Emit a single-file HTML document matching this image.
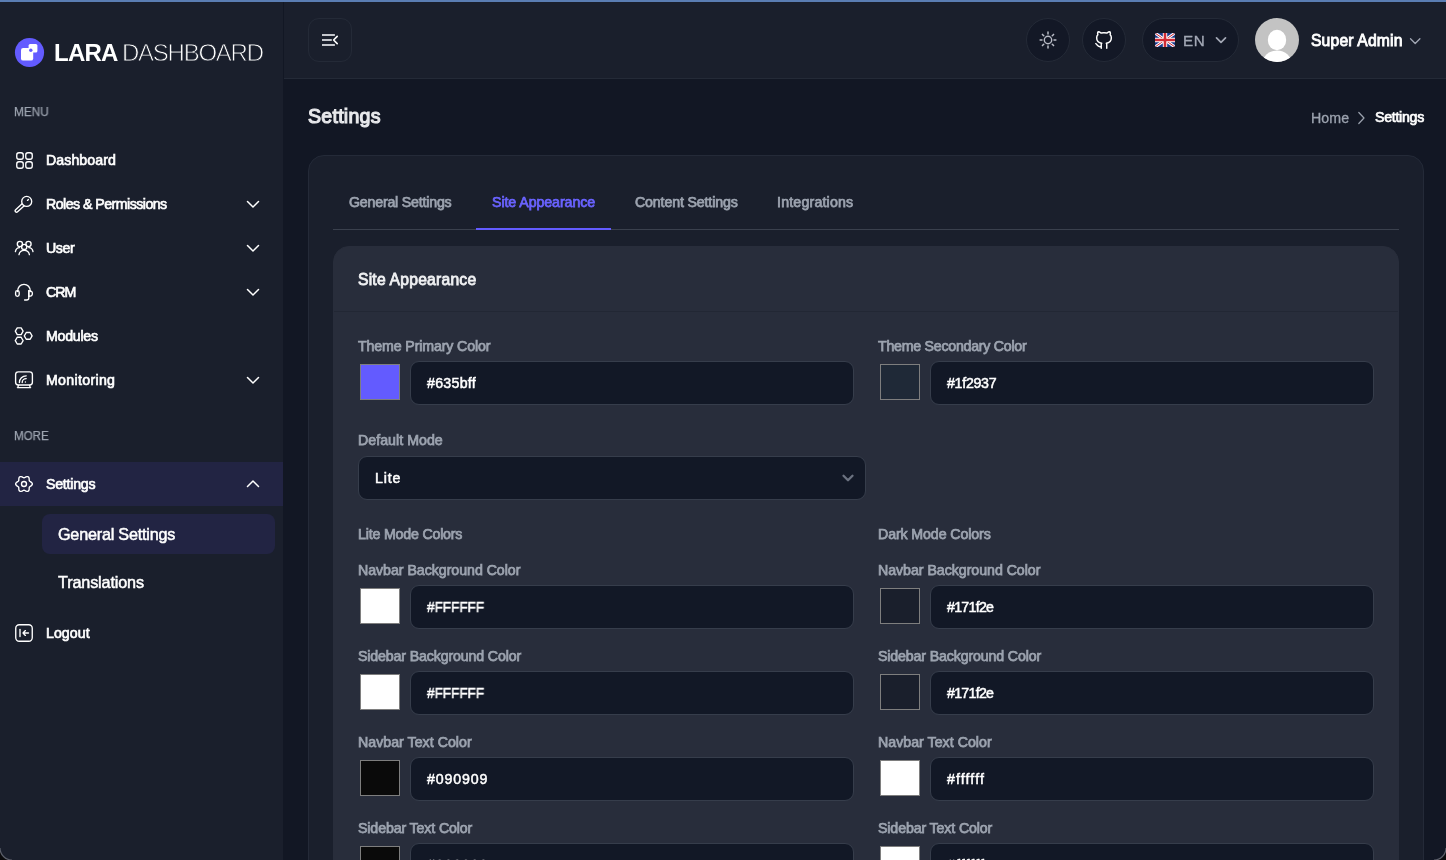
<!DOCTYPE html>
<html><head><meta charset="utf-8"><title>Settings - Lara Dashboard</title>
<style>
html,body{margin:0;padding:0;}
body{width:1446px;height:860px;overflow:hidden;position:relative;background:#121724;font-family:"Liberation Sans", sans-serif;}
.t{position:absolute;white-space:nowrap;line-height:1;will-change:transform;}
</style></head><body>
<div style="position:absolute;left:0px;top:0px;width:1446px;height:2px;background:#5a7db3"></div>
<div style="position:absolute;left:0px;top:2px;width:283px;height:858px;background:#1a1f2c"></div>
<div style="position:absolute;left:284px;top:2px;width:1162px;height:76px;background:#1a1f2c"></div>
<div style="position:absolute;left:284px;top:78px;width:1162px;height:1px;background:#242a37"></div>
<div style="position:absolute;left:0px;top:462px;width:283px;height:44px;background:#222443"></div>
<div style="position:absolute;left:42px;top:514px;width:233px;height:40px;background:#222443;border-radius:8px"></div>
<svg style="position:absolute;left:14px;top:37px;" width="31" height="31" viewBox="0 0 31 31" fill="none"><circle cx="15.5" cy="15.5" r="14.6" fill="#635bff"/><rect x="14.6" y="7" width="8.8" height="8.6" rx="1.6" fill="#fff"/><rect x="7" y="11" width="12.2" height="12.6" rx="2.2" fill="#fff"/><circle cx="16.8" cy="13.3" r="1.7" fill="#635bff"/></svg>
<svg style="position:absolute;left:15px;top:151px;" width="19" height="19" viewBox="0 0 19 19" fill="none"><rect x="1.75" y="1.75" width="6.5" height="6.5" rx="2.2" stroke="#ffffff" stroke-width="1.35" stroke-linecap="round" stroke-linejoin="round"/><rect x="10.75" y="1.75" width="6.5" height="6.5" rx="2.2" stroke="#ffffff" stroke-width="1.35" stroke-linecap="round" stroke-linejoin="round"/><rect x="1.75" y="10.75" width="6.5" height="6.5" rx="2.2" stroke="#ffffff" stroke-width="1.35" stroke-linecap="round" stroke-linejoin="round"/><rect x="10.75" y="10.75" width="6.5" height="6.5" rx="2.2" stroke="#ffffff" stroke-width="1.35" stroke-linecap="round" stroke-linejoin="round"/></svg>
<svg style="position:absolute;left:14px;top:194px;" width="20" height="20" viewBox="0 0 20 20" fill="none"><path d="M9.6 10.4 L2.6 16.8" stroke="#fff" stroke-width="4.2" stroke-linecap="round"/><path d="M9.6 10.4 L2.6 16.8" stroke="#1a1f2c" stroke-width="1.5" stroke-linecap="round"/><circle cx="12.7" cy="7.4" r="5.0" fill="#1a1f2c" stroke="#fff" stroke-width="1.35"/><path d="M13.5 6.4 L14.4 5.5" stroke="#ffffff" stroke-width="1.35" stroke-linecap="round" stroke-linejoin="round"/></svg>
<svg style="position:absolute;left:14px;top:238px;" width="20" height="18" viewBox="0 0 20 18" fill="none"><circle cx="5.9" cy="6.0" r="2.6" stroke="#ffffff" stroke-width="1.35" stroke-linecap="round" stroke-linejoin="round"/><circle cx="14.5" cy="6.0" r="2.6" stroke="#ffffff" stroke-width="1.35" stroke-linecap="round" stroke-linejoin="round"/><circle cx="10.2" cy="8.9" r="2.6" stroke="#ffffff" stroke-width="1.35" stroke-linecap="round" stroke-linejoin="round"/><path d="M1.4 13.6 C1.9 10.9 3.6 9.6 5.6 9.6" stroke="#ffffff" stroke-width="1.35" stroke-linecap="round" stroke-linejoin="round"/><path d="M19 13.6 C18.5 10.9 16.8 9.6 14.8 9.6" stroke="#ffffff" stroke-width="1.35" stroke-linecap="round" stroke-linejoin="round"/><path d="M5 16.6 C5.5 13.8 7.6 12.4 10.2 12.4 C12.8 12.4 14.9 13.8 15.4 16.6" stroke="#ffffff" stroke-width="1.35" stroke-linecap="round" stroke-linejoin="round"/></svg>
<svg style="position:absolute;left:14px;top:282px;" width="20" height="20" viewBox="0 0 20 20" fill="none"><path d="M3.6 9.5 C3.6 5.2 6.4 2.3 10 2.3 C13.6 2.3 16.4 5.2 16.4 9.5" stroke="#ffffff" stroke-width="1.35" stroke-linecap="round" stroke-linejoin="round"/><rect x="1.6" y="8.6" width="3.6" height="5.8" rx="1.8" stroke="#ffffff" stroke-width="1.35" stroke-linecap="round" stroke-linejoin="round"/><path d="M14.8 8.6 C17 8.6 18.4 10 18.4 11.5 C18.4 13 17 14.4 14.8 14.4 Z" stroke="#ffffff" stroke-width="1.35" stroke-linecap="round" stroke-linejoin="round"/><path d="M14.8 8.6 V16 C14.8 17.2 13.8 18 12.6 18 H10.6" stroke="#ffffff" stroke-width="1.35" stroke-linecap="round" stroke-linejoin="round"/></svg>
<svg style="position:absolute;left:14px;top:326px;" width="20" height="20" viewBox="0 0 20 20" fill="none"><path d="M9.10 5.20 L7.15 8.58 L3.25 8.58 L1.30 5.20 L3.25 1.82 L7.15 1.82 Z" stroke="#ffffff" stroke-width="1.35" stroke-linecap="round" stroke-linejoin="round"/><path d="M9.10 14.60 L7.15 17.98 L3.25 17.98 L1.30 14.60 L3.25 11.22 L7.15 11.22 Z" stroke="#ffffff" stroke-width="1.35" stroke-linecap="round" stroke-linejoin="round"/><path d="M18.10 9.90 L16.15 13.28 L12.25 13.28 L10.30 9.90 L12.25 6.52 L16.15 6.52 Z" stroke="#ffffff" stroke-width="1.35" stroke-linecap="round" stroke-linejoin="round"/></svg>
<svg style="position:absolute;left:14px;top:370px;" width="20" height="20" viewBox="0 0 20 20" fill="none"><rect x="1.6" y="1.8" width="16.8" height="13.2" rx="2.8" stroke="#ffffff" stroke-width="1.35" stroke-linecap="round" stroke-linejoin="round"/><path d="M4.4 15.4 L3.8 17.6 M15.6 15.4 L16.2 17.6 M3.4 17.6 H16.6" stroke="#ffffff" stroke-width="1.35" stroke-linecap="round" stroke-linejoin="round"/><path d="M8.2 12.6 C8.2 10.4 10 8.6 12.2 8.6" stroke="#ffffff" stroke-width="1.35" stroke-linecap="round" stroke-linejoin="round"/><path d="M5.4 12.6 C5.4 8.8 8.4 5.8 12.2 5.8" stroke="#ffffff" stroke-width="1.35" stroke-linecap="round" stroke-linejoin="round"/><circle cx="11.4" cy="12" r="0.7" fill="#fff"/></svg>
<svg style="position:absolute;left:14px;top:474px;" width="20" height="20" viewBox="0 0 20 20" fill="none"><path d="M 18.35 10.00 L 18.31 10.36 L 18.18 10.72 L 17.97 11.05 L 17.71 11.36 L 17.39 11.64 L 17.05 11.89 L 16.70 12.11 L 16.37 12.32 L 16.06 12.51 L 15.79 12.70 L 15.58 12.90 L 15.41 13.12 L 15.30 13.38 L 15.23 13.67 L 15.20 13.99 L 15.19 14.35 L 15.18 14.75 L 15.16 15.16 L 15.12 15.58 L 15.03 15.99 L 14.90 16.38 L 14.71 16.72 L 14.47 17.01 L 14.18 17.23 L 13.84 17.37 L 13.47 17.44 L 13.08 17.43 L 12.68 17.35 L 12.28 17.22 L 11.89 17.05 L 11.52 16.86 L 11.18 16.67 L 10.86 16.50 L 10.56 16.37 L 10.27 16.28 L 10.00 16.25 L 9.73 16.28 L 9.44 16.37 L 9.14 16.50 L 8.82 16.67 L 8.48 16.86 L 8.11 17.05 L 7.72 17.22 L 7.32 17.35 L 6.92 17.43 L 6.53 17.44 L 6.16 17.37 L 5.83 17.23 L 5.53 17.01 L 5.29 16.72 L 5.10 16.38 L 4.97 15.99 L 4.88 15.58 L 4.84 15.16 L 4.82 14.75 L 4.81 14.35 L 4.80 13.99 L 4.77 13.67 L 4.70 13.38 L 4.59 13.12 L 4.42 12.90 L 4.21 12.70 L 3.94 12.51 L 3.63 12.32 L 3.30 12.11 L 2.95 11.89 L 2.61 11.64 L 2.29 11.36 L 2.03 11.05 L 1.82 10.72 L 1.69 10.36 L 1.65 10.00 L 1.69 9.64 L 1.82 9.28 L 2.03 8.95 L 2.29 8.64 L 2.61 8.36 L 2.95 8.11 L 3.30 7.89 L 3.63 7.68 L 3.94 7.49 L 4.21 7.30 L 4.42 7.10 L 4.59 6.87 L 4.70 6.62 L 4.77 6.33 L 4.80 6.01 L 4.81 5.65 L 4.82 5.25 L 4.84 4.84 L 4.88 4.42 L 4.97 4.01 L 5.10 3.62 L 5.29 3.28 L 5.53 2.99 L 5.82 2.77 L 6.16 2.63 L 6.53 2.56 L 6.92 2.57 L 7.32 2.65 L 7.72 2.78 L 8.11 2.95 L 8.48 3.14 L 8.82 3.33 L 9.14 3.50 L 9.44 3.63 L 9.73 3.72 L 10.00 3.75 L 10.27 3.72 L 10.56 3.63 L 10.86 3.50 L 11.18 3.33 L 11.52 3.14 L 11.89 2.95 L 12.28 2.78 L 12.68 2.65 L 13.08 2.57 L 13.47 2.56 L 13.84 2.63 L 14.18 2.77 L 14.47 2.99 L 14.71 3.28 L 14.90 3.62 L 15.03 4.01 L 15.12 4.42 L 15.16 4.84 L 15.18 5.25 L 15.19 5.65 L 15.20 6.01 L 15.23 6.33 L 15.30 6.62 L 15.41 6.87 L 15.58 7.10 L 15.79 7.30 L 16.06 7.49 L 16.37 7.68 L 16.70 7.89 L 17.05 8.11 L 17.39 8.36 L 17.71 8.64 L 17.97 8.95 L 18.18 9.28 L 18.31 9.64 Z" stroke="#ffffff" stroke-width="1.35" stroke-linecap="round" stroke-linejoin="round"/><circle cx="10" cy="10" r="2.5" stroke="#ffffff" stroke-width="1.35" stroke-linecap="round" stroke-linejoin="round"/></svg>
<svg style="position:absolute;left:14px;top:623px;" width="20" height="20" viewBox="0 0 20 20" fill="none"><rect x="1.75" y="1.75" width="16.5" height="16.5" rx="3.5" stroke="#ffffff" stroke-width="1.35" stroke-linecap="round" stroke-linejoin="round"/><path d="M6 6.5 V13.5" stroke="#ffffff" stroke-width="1.35" stroke-linecap="round" stroke-linejoin="round"/><path d="M14.5 10 H9 M11.4 7.6 L9 10 L11.4 12.4" stroke="#ffffff" stroke-width="1.35" stroke-linecap="round" stroke-linejoin="round"/></svg>
<svg style="position:absolute;left:245px;top:198px;" width="16" height="12" viewBox="0 0 16 12" fill="none"><path d="M2.5 3.5 L8 9 L13.5 3.5" stroke="#fff" stroke-width="1.5" stroke-linecap="round" stroke-linejoin="round"/></svg>
<svg style="position:absolute;left:245px;top:242px;" width="16" height="12" viewBox="0 0 16 12" fill="none"><path d="M2.5 3.5 L8 9 L13.5 3.5" stroke="#fff" stroke-width="1.5" stroke-linecap="round" stroke-linejoin="round"/></svg>
<svg style="position:absolute;left:245px;top:286px;" width="16" height="12" viewBox="0 0 16 12" fill="none"><path d="M2.5 3.5 L8 9 L13.5 3.5" stroke="#fff" stroke-width="1.5" stroke-linecap="round" stroke-linejoin="round"/></svg>
<svg style="position:absolute;left:245px;top:374px;" width="16" height="12" viewBox="0 0 16 12" fill="none"><path d="M2.5 3.5 L8 9 L13.5 3.5" stroke="#fff" stroke-width="1.5" stroke-linecap="round" stroke-linejoin="round"/></svg>
<svg style="position:absolute;left:245px;top:478px;" width="16" height="12" viewBox="0 0 16 12" fill="none"><path d="M2.5 8.5 L8 3 L13.5 8.5" stroke="#fff" stroke-width="1.5" stroke-linecap="round" stroke-linejoin="round"/></svg>
<div style="position:absolute;left:308px;top:18px;width:42px;height:42px;border:1px solid #242a37;border-radius:11px"></div>
<svg style="position:absolute;left:318px;top:30px;" width="24" height="20" viewBox="0 0 24 20" fill="none"><path d="M4 4.9 H16.9 M4 10 H13.8 M4 15.1 H16.9" stroke="#c4c6cc" stroke-width="2"/><path d="M19.2 6.4 L15.6 10 L19.2 13.6" stroke="#fff" stroke-width="1.6" stroke-linecap="round" stroke-linejoin="round"/></svg>
<div style="position:absolute;left:1026px;top:18px;width:42px;height:42px;border:1px solid #242a37;border-radius:50%;background:#131826"></div>
<svg style="position:absolute;left:1037px;top:29px;" width="22" height="22" viewBox="0 0 22 22" fill="none"><circle cx="11" cy="11" r="3.7" stroke="#b9bcc6" stroke-width="1.4"/><path d="M17.00 11.00 L18.90 11.00" stroke="#b9bcc6" stroke-width="1.5" stroke-linecap="round"/><path d="M15.24 15.24 L16.59 16.59" stroke="#b9bcc6" stroke-width="1.5" stroke-linecap="round"/><path d="M11.00 17.00 L11.00 18.90" stroke="#b9bcc6" stroke-width="1.5" stroke-linecap="round"/><path d="M6.76 15.24 L5.41 16.59" stroke="#b9bcc6" stroke-width="1.5" stroke-linecap="round"/><path d="M5.00 11.00 L3.10 11.00" stroke="#b9bcc6" stroke-width="1.5" stroke-linecap="round"/><path d="M6.76 6.76 L5.41 5.41" stroke="#b9bcc6" stroke-width="1.5" stroke-linecap="round"/><path d="M11.00 5.00 L11.00 3.10" stroke="#b9bcc6" stroke-width="1.5" stroke-linecap="round"/><path d="M15.24 6.76 L16.59 5.41" stroke="#b9bcc6" stroke-width="1.5" stroke-linecap="round"/></svg>
<div style="position:absolute;left:1082px;top:18px;width:42px;height:42px;border:1px solid #242a37;border-radius:50%;background:#131826"></div>
<svg style="position:absolute;left:1093px;top:29px;" width="22" height="22" viewBox="0 0 24 24" fill="none"><path d="M9 19c-4.3 1.4 -4.3 -2.5 -6 -3m12 5v-3.5c0 -1 .1 -1.4 -.5 -2c2.8 -.3 5.5 -1.4 5.5 -6a4.6 4.6 0 0 0 -1.3 -3.2a4.2 4.2 0 0 0 -.1 -3.2s-1.1 -.3 -3.5 1.3a12.3 12.3 0 0 0 -6.2 0c-2.4 -1.6 -3.5 -1.3 -3.5 -1.3a4.2 4.2 0 0 0 -.1 3.2a4.6 4.6 0 0 0 -1.3 3.2c0 4.6 2.7 5.7 5.5 6c-.6 .6 -.6 1.2 -.5 2v3.5" stroke="#fff" stroke-width="1.6" stroke-linecap="round" stroke-linejoin="round"/></svg>
<div style="position:absolute;left:1142px;top:18px;width:95px;height:42px;border:1px solid #242a37;border-radius:22px;background:#131826"></div>
<svg style="position:absolute;left:1155px;top:33px;" width="20" height="14" viewBox="0 0 20 14" fill="none"><defs><clipPath id="fc"><rect width="20" height="14" rx="2"/></clipPath></defs><g clip-path="url(#fc)"><rect width="20" height="14" fill="#1a3a8c"/><path d="M0 0 L20 14 M20 0 L0 14" stroke="#fff" stroke-width="3"/><path d="M0 0 L20 14 M20 0 L0 14" stroke="#c8202f" stroke-width="1"/><path d="M10 0 V14 M0 7 H20" stroke="#fff" stroke-width="4.4"/><path d="M10 0 V14 M0 7 H20" stroke="#cf2b36" stroke-width="2.6"/></g></svg>
<svg style="position:absolute;left:1213px;top:34px;" width="16" height="12" viewBox="0 0 16 12" fill="none"><path d="M3.5 3.8 L8 8.3 L12.5 3.8" stroke="#a3a8b5" stroke-width="1.7" stroke-linecap="round" stroke-linejoin="round"/></svg>
<svg style="position:absolute;left:1255px;top:18px;" width="44" height="44" viewBox="0 0 44 44" fill="none"><defs><clipPath id="av"><circle cx="22" cy="22" r="22"/></clipPath></defs><g clip-path="url(#av)"><rect width="44" height="44" fill="#c3c3c3"/><ellipse cx="22" cy="22" rx="9.2" ry="10.2" fill="#fff"/><ellipse cx="22" cy="46" rx="15" ry="13.5" fill="#fff"/></g></svg>
<svg style="position:absolute;left:1407px;top:35px;" width="16" height="12" viewBox="0 0 16 12" fill="none"><path d="M3.5 3.8 L8.2 8.5 L12.9 3.8" stroke="#a3a8b5" stroke-width="1.3" stroke-linecap="round" stroke-linejoin="round"/></svg>
<svg style="position:absolute;left:1355px;top:111px;" width="12" height="14" viewBox="0 0 12 14" fill="none"><path d="M3.8 1.5 L9 7 L3.8 12.5" stroke="#9ca3af" stroke-width="1.2" stroke-linecap="round" stroke-linejoin="round"/></svg>
<div style="position:absolute;left:308px;top:155px;width:1114px;height:720px;border:1px solid #242a38;border-radius:16px;background:#1a1f2c"></div>
<div style="position:absolute;left:333px;top:229px;width:1066px;height:1px;background:#3a404d"></div>
<div style="position:absolute;left:476px;top:228px;width:135px;height:2px;background:#635bff"></div>
<div style="position:absolute;left:333px;top:246px;width:1064px;height:720px;border:1px solid #282d3b;border-radius:16px;background:#282d3b"></div>
<div style="position:absolute;left:334px;top:311px;width:1064px;height:1px;background:#222734"></div>
<div style="position:absolute;left:410px;top:361px;width:442px;height:42px;border:1px solid #363d4b;border-radius:9px;background:#121826"></div>
<div style="position:absolute;left:360px;top:364px;width:38px;height:34px;border:1px solid #7e7e7e;background:#635bff"></div>
<div style="position:absolute;left:930px;top:361px;width:442px;height:42px;border:1px solid #363d4b;border-radius:9px;background:#121826"></div>
<div style="position:absolute;left:880px;top:364px;width:38px;height:34px;border:1px solid #7e7e7e;background:#1f2937"></div>
<div style="position:absolute;left:358px;top:456px;width:506px;height:42px;border:1px solid #363d4b;border-radius:9px;background:#121826"></div>
<svg style="position:absolute;left:840px;top:470px;" width="16" height="16" viewBox="0 0 16 16" fill="none"><path d="M3.5 5.8 L8 10.3 L12.5 5.8" stroke="#6b7280" stroke-width="2.3" stroke-linecap="round" stroke-linejoin="round"/></svg>
<div style="position:absolute;left:410px;top:585px;width:442px;height:42px;border:1px solid #363d4b;border-radius:9px;background:#121826"></div>
<div style="position:absolute;left:360px;top:588px;width:38px;height:34px;border:1px solid #7e7e7e;background:#ffffff"></div>
<div style="position:absolute;left:930px;top:585px;width:442px;height:42px;border:1px solid #363d4b;border-radius:9px;background:#121826"></div>
<div style="position:absolute;left:880px;top:588px;width:38px;height:34px;border:1px solid #7e7e7e;background:#1a1f2c"></div>
<div style="position:absolute;left:410px;top:671px;width:442px;height:42px;border:1px solid #363d4b;border-radius:9px;background:#121826"></div>
<div style="position:absolute;left:360px;top:674px;width:38px;height:34px;border:1px solid #7e7e7e;background:#ffffff"></div>
<div style="position:absolute;left:930px;top:671px;width:442px;height:42px;border:1px solid #363d4b;border-radius:9px;background:#121826"></div>
<div style="position:absolute;left:880px;top:674px;width:38px;height:34px;border:1px solid #7e7e7e;background:#1a1f2c"></div>
<div style="position:absolute;left:410px;top:757px;width:442px;height:42px;border:1px solid #363d4b;border-radius:9px;background:#121826"></div>
<div style="position:absolute;left:360px;top:760px;width:38px;height:34px;border:1px solid #7e7e7e;background:#0a0a0a"></div>
<div style="position:absolute;left:930px;top:757px;width:442px;height:42px;border:1px solid #363d4b;border-radius:9px;background:#121826"></div>
<div style="position:absolute;left:880px;top:760px;width:38px;height:34px;border:1px solid #7e7e7e;background:#ffffff"></div>
<div style="position:absolute;left:410px;top:843px;width:442px;height:42px;border:1px solid #363d4b;border-radius:9px;background:#121826"></div>
<div style="position:absolute;left:360px;top:846px;width:38px;height:34px;border:1px solid #7e7e7e;background:#0a0a0a"></div>
<div style="position:absolute;left:930px;top:843px;width:442px;height:42px;border:1px solid #363d4b;border-radius:9px;background:#121826"></div>
<div style="position:absolute;left:880px;top:846px;width:38px;height:34px;border:1px solid #7e7e7e;background:#ffffff"></div>
<svg style="position:absolute;left:1434px;top:848px;" width="12" height="12" viewBox="0 0 12 12" fill="none"><path d="M12 0 V12 H0 A12 12 0 0 0 12 0 Z" fill="#0b0b0d"/><path d="M0 12 A12 12 0 0 0 12 0" stroke="#5b5f6a" stroke-width="1.2"/></svg>
<svg style="position:absolute;left:0px;top:848px;" width="12" height="12" viewBox="0 0 12 12" fill="none"><path d="M0 0 V12 H12 A12 12 0 0 1 0 0 Z" fill="#0b0b0d"/><path d="M12 12 A12 12 0 0 1 0 0" stroke="#5b5f6a" stroke-width="1.2"/></svg>
<div class="t" style="left:54.22px;top:40.68px;font-size:24.00px;letter-spacing:-0.747px;color:#ffffff;font-weight:700;">LARA</div>
<div class="t" style="left:121.93px;top:40.68px;font-size:24.00px;letter-spacing:-1.253px;color:#ffffff;-webkit-text-stroke:0.80px #1a1f2c;">DASHBOARD</div>
<div class="t" style="left:13.64px;top:105.64px;font-size:12.00px;letter-spacing:0.000px;color:#9ca3af;-webkit-text-stroke:0.25px #9ca3af;transform:scaleX(0.9796);transform-origin:1.11px 0;">MENU</div>
<div class="t" style="left:45.76px;top:152.88px;font-size:14.20px;letter-spacing:0.057px;color:#ffffff;-webkit-text-stroke:0.65px #ffffff;">Dashboard</div>
<div class="t" style="left:45.76px;top:196.98px;font-size:14.20px;letter-spacing:-0.537px;color:#ffffff;-webkit-text-stroke:0.65px #ffffff;">Roles &amp; Permissions</div>
<div class="t" style="left:45.83px;top:240.98px;font-size:14.20px;letter-spacing:-0.402px;color:#ffffff;-webkit-text-stroke:0.65px #ffffff;">User</div>
<div class="t" style="left:46.22px;top:285.18px;font-size:14.20px;letter-spacing:-0.954px;color:#ffffff;-webkit-text-stroke:0.65px #ffffff;">CRM</div>
<div class="t" style="left:45.76px;top:328.78px;font-size:14.20px;letter-spacing:-0.275px;color:#ffffff;-webkit-text-stroke:0.65px #ffffff;">Modules</div>
<div class="t" style="left:45.76px;top:372.98px;font-size:14.20px;letter-spacing:0.303px;color:#ffffff;-webkit-text-stroke:0.65px #ffffff;">Monitoring</div>
<div class="t" style="left:13.64px;top:430.34px;font-size:12.00px;letter-spacing:0.000px;color:#9ca3af;-webkit-text-stroke:0.25px #9ca3af;transform:scaleX(0.9634);transform-origin:1.11px 0;">MORE</div>
<div class="t" style="left:45.99px;top:477.18px;font-size:14.20px;letter-spacing:-0.243px;color:#ffffff;-webkit-text-stroke:0.65px #ffffff;">Settings</div>
<div class="t" style="left:57.74px;top:526.19px;font-size:16.20px;letter-spacing:-0.219px;color:#ffffff;-webkit-text-stroke:0.50px #ffffff;">General Settings</div>
<div class="t" style="left:58.19px;top:574.29px;font-size:16.20px;letter-spacing:-0.137px;color:#ffffff;-webkit-text-stroke:0.50px #ffffff;">Translations</div>
<div class="t" style="left:45.66px;top:625.58px;font-size:14.20px;letter-spacing:0.035px;color:#ffffff;-webkit-text-stroke:0.65px #ffffff;">Logout</div>
<div class="t" style="left:1182.73px;top:33.03px;font-size:15.20px;letter-spacing:0.515px;color:#a3a8b5;-webkit-text-stroke:0.35px #a3a8b5;">EN</div>
<div class="t" style="left:1311.02px;top:32.91px;font-size:15.70px;letter-spacing:0.158px;color:#ffffff;-webkit-text-stroke:0.85px #ffffff;">Super Admin</div>
<div class="t" style="left:307.87px;top:107.21px;font-size:19.60px;letter-spacing:0.239px;color:#e8e9ec;-webkit-text-stroke:1.10px #e8e9ec;">Settings</div>
<div class="t" style="left:1310.79px;top:110.98px;font-size:14.20px;letter-spacing:0.073px;color:#9ca3af;-webkit-text-stroke:0.30px #9ca3af;">Home</div>
<div class="t" style="left:1374.71px;top:110.48px;font-size:14.20px;letter-spacing:-0.279px;color:#ffffff;-webkit-text-stroke:0.70px #ffffff;">Settings</div>
<div class="t" style="left:348.77px;top:195.18px;font-size:14.20px;letter-spacing:-0.200px;color:#9ca3af;-webkit-text-stroke:0.75px #9ca3af;">General Settings</div>
<div class="t" style="left:491.54px;top:195.18px;font-size:14.20px;letter-spacing:-0.071px;color:#6a63ff;-webkit-text-stroke:0.75px #6a63ff;">Site Appearance</div>
<div class="t" style="left:634.87px;top:195.18px;font-size:14.20px;letter-spacing:-0.142px;color:#9ca3af;-webkit-text-stroke:0.75px #9ca3af;">Content Settings</div>
<div class="t" style="left:777.27px;top:195.18px;font-size:14.20px;letter-spacing:0.187px;color:#9ca3af;-webkit-text-stroke:0.75px #9ca3af;">Integrations</div>
<div class="t" style="left:357.89px;top:271.71px;font-size:15.70px;letter-spacing:0.213px;color:#f0f1f3;-webkit-text-stroke:0.80px #f0f1f3;">Site Appearance</div>
<div class="t" style="left:358.36px;top:339.28px;font-size:14.20px;letter-spacing:-0.130px;color:#9ca3af;-webkit-text-stroke:0.75px #9ca3af;">Theme Primary Color</div>
<div class="t" style="left:878.26px;top:339.28px;font-size:14.20px;letter-spacing:-0.255px;color:#9ca3af;-webkit-text-stroke:0.75px #9ca3af;">Theme Secondary Color</div>
<div class="t" style="left:427.49px;top:376.08px;font-size:14.20px;letter-spacing:0.283px;color:#ffffff;-webkit-text-stroke:0.50px #ffffff;">#635bff</div>
<div class="t" style="left:947.09px;top:376.08px;font-size:14.20px;letter-spacing:-0.278px;color:#ffffff;-webkit-text-stroke:0.50px #ffffff;">#1f2937</div>
<div class="t" style="left:358.01px;top:432.68px;font-size:14.20px;letter-spacing:0.034px;color:#9ca3af;-webkit-text-stroke:0.75px #9ca3af;">Default Mode</div>
<div class="t" style="left:374.69px;top:470.88px;font-size:14.20px;letter-spacing:0.800px;color:#ffffff;-webkit-text-stroke:0.50px #ffffff;">Lite</div>
<div class="t" style="left:357.71px;top:526.78px;font-size:14.20px;letter-spacing:-0.187px;color:#9ca3af;-webkit-text-stroke:0.75px #9ca3af;">Lite Mode Colors</div>
<div class="t" style="left:877.51px;top:526.78px;font-size:14.20px;letter-spacing:-0.107px;color:#9ca3af;-webkit-text-stroke:0.75px #9ca3af;">Dark Mode Colors</div>
<div class="t" style="left:357.51px;top:563.08px;font-size:14.20px;letter-spacing:-0.038px;color:#9ca3af;-webkit-text-stroke:0.75px #9ca3af;">Navbar Background Color</div>
<div class="t" style="left:877.51px;top:563.08px;font-size:14.20px;letter-spacing:-0.038px;color:#9ca3af;-webkit-text-stroke:0.75px #9ca3af;">Navbar Background Color</div>
<div class="t" style="left:427.49px;top:600.08px;font-size:14.20px;letter-spacing:0.000px;color:#ffffff;-webkit-text-stroke:0.50px #ffffff;transform:scaleX(0.9526);transform-origin:0.31px 0;">#FFFFFF</div>
<div class="t" style="left:947.09px;top:600.08px;font-size:14.20px;letter-spacing:-0.725px;color:#ffffff;-webkit-text-stroke:0.50px #ffffff;">#171f2e</div>
<div class="t" style="left:358.04px;top:649.08px;font-size:14.20px;letter-spacing:-0.141px;color:#9ca3af;-webkit-text-stroke:0.75px #9ca3af;">Sidebar Background Color</div>
<div class="t" style="left:878.04px;top:649.08px;font-size:14.20px;letter-spacing:-0.141px;color:#9ca3af;-webkit-text-stroke:0.75px #9ca3af;">Sidebar Background Color</div>
<div class="t" style="left:427.49px;top:686.08px;font-size:14.20px;letter-spacing:0.000px;color:#ffffff;-webkit-text-stroke:0.50px #ffffff;transform:scaleX(0.9526);transform-origin:0.31px 0;">#FFFFFF</div>
<div class="t" style="left:947.09px;top:686.08px;font-size:14.20px;letter-spacing:-0.725px;color:#ffffff;-webkit-text-stroke:0.50px #ffffff;">#171f2e</div>
<div class="t" style="left:357.51px;top:735.08px;font-size:14.20px;letter-spacing:0.022px;color:#9ca3af;-webkit-text-stroke:0.75px #9ca3af;">Navbar Text Color</div>
<div class="t" style="left:877.51px;top:735.08px;font-size:14.20px;letter-spacing:0.022px;color:#9ca3af;-webkit-text-stroke:0.75px #9ca3af;">Navbar Text Color</div>
<div class="t" style="left:427.49px;top:772.08px;font-size:14.20px;letter-spacing:0.874px;color:#ffffff;-webkit-text-stroke:0.50px #ffffff;">#090909</div>
<div class="t" style="left:947.09px;top:772.08px;font-size:14.20px;letter-spacing:1.107px;color:#ffffff;-webkit-text-stroke:0.50px #ffffff;">#ffffff</div>
<div class="t" style="left:358.04px;top:821.08px;font-size:14.20px;letter-spacing:-0.126px;color:#9ca3af;-webkit-text-stroke:0.75px #9ca3af;">Sidebar Text Color</div>
<div class="t" style="left:878.04px;top:821.08px;font-size:14.20px;letter-spacing:-0.126px;color:#9ca3af;-webkit-text-stroke:0.75px #9ca3af;">Sidebar Text Color</div>
<div class="t" style="left:427.49px;top:858.08px;font-size:14.20px;letter-spacing:0.874px;color:#ffffff;-webkit-text-stroke:0.50px #ffffff;">#090909</div>
<div class="t" style="left:947.09px;top:858.08px;font-size:14.20px;letter-spacing:1.107px;color:#ffffff;-webkit-text-stroke:0.50px #ffffff;">#ffffff</div>
</body></html>
